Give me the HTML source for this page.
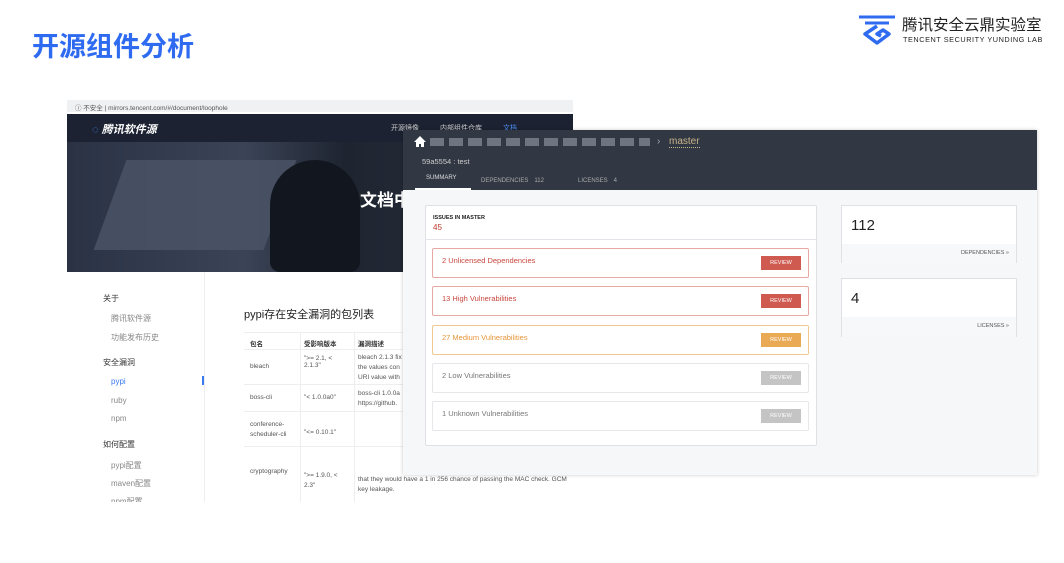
<!DOCTYPE html>
<html><head><meta charset="utf-8"><style>
*{margin:0;padding:0;box-sizing:border-box}
body{width:1064px;height:563px;background:#fff;position:relative;overflow:hidden;font-family:"Liberation Sans","Noto Sans CJK SC",sans-serif}
.a{position:absolute}
.s{position:absolute;font-size:8px;color:#888;white-space:nowrap}
.h{color:#333}
</style></head><body>
<div class="a" style="left:32px;top:25px;font-size:27px;font-weight:bold;color:#2f6bf0;letter-spacing:0px">开源组件分析</div>
<svg class="a" style="left:857px;top:13px" width="40" height="32" viewBox="0 0 40 32">
<path d="M2 4h36" stroke="#2f6bf0" stroke-width="3"/>
<path d="M8 10h24" stroke="#2f6bf0" stroke-width="3"/>
<path d="M20 13 L8 21 L20 30 L32 21 L26 17 L20 21 L24 23" fill="none" stroke="#2f6bf0" stroke-width="3.5" stroke-linejoin="round"/>
</svg>
<div class="a" style="left:902px;top:13px;font-size:15.5px;color:#222;white-space:nowrap">腾讯安全云鼎实验室</div>
<div class="a" style="left:903px;top:35px;font-size:7.3px;color:#222;letter-spacing:.55px;white-space:nowrap">TENCENT SECURITY YUNDING LAB</div>

<!-- left screenshot -->
<div class="a" style="left:67px;top:100px;width:506px;height:402px;overflow:hidden">
<div class="a" style="left:0;top:0;width:506px;height:12px;background:#f0f1f3;font-size:6.5px;color:#555;padding:2px 8px">ⓘ 不安全 | mirrors.tencent.com/#/document/loophole</div>
<div class="a" style="left:0;top:14px;width:506px;height:28px;background:#1c2231"></div>
<div class="a" style="left:25px;top:21px;color:#fff;font-size:11px;font-weight:bold;font-style:italic"><span style="color:#3a8ef0">◌</span> 腾讯软件源</div>
<div class="a" style="left:324px;top:23px;color:#ccc;font-size:7px;white-space:nowrap">开源镜像　　　内部组件仓库　　　<span style="color:#4b8cf5">文档</span></div>
<div class="a" style="left:0;top:42px;width:506px;height:130px;background:linear-gradient(90deg,#2a3244 0%,#3b4457 35%,#1e2430 55%,#2d3441 100%)"></div>
<div class="a" style="left:43px;top:60px;width:170px;height:90px;background:#4c5568;transform:skewX(-20deg);opacity:.8"></div>
<div class="a" style="left:203px;top:60px;width:90px;height:112px;background:#12161e;border-radius:45px 45px 10px 10px"></div>
<div class="a" style="left:293px;top:86px;color:#fff;font-size:17px;font-weight:bold">文档中</div>
<div class="a" style="left:137px;top:172px;width:1px;height:230px;background:#eee"></div>
<div class="s h" style="left:36px;top:193px">关于</div>
<div class="s" style="left:44px;top:213px">腾讯软件源</div>
<div class="s" style="left:44px;top:232px">功能发布历史</div>
<div class="s h" style="left:36px;top:257px">安全漏洞</div>
<div class="s" style="left:44px;top:277px;color:#3a7af0">pypi</div>
<div class="s" style="left:44px;top:296px">ruby</div>
<div class="s" style="left:44px;top:314px">npm</div>
<div class="s h" style="left:36px;top:339px">如何配置</div>
<div class="s" style="left:44px;top:360px">pypi配置</div>
<div class="s" style="left:44px;top:378px">maven配置</div>
<div class="s" style="left:44px;top:396px">npm配置</div>
<div class="a" style="left:135px;top:276px;width:2px;height:9px;background:#3a7af0"></div>
<div class="a" style="left:177px;top:206px;font-size:11px;color:#222">pypi存在安全漏洞的包列表</div>
<div class="a" style="left:177px;top:232px;width:170px;height:170px;font-size:6.5px;color:#555">
<div style="position:absolute;left:0;top:0;width:170px;border-top:1px solid #eee">
<div style="height:17px;border-bottom:1px solid #eee;padding:5px 6px;font-weight:bold;color:#333">包名<span style="position:absolute;left:60px">受影响版本</span><span style="position:absolute;left:114px">漏洞描述</span></div>
<div style="height:35px;border-bottom:1px solid #eee;padding:13px 6px">bleach<span style="position:absolute;left:60px;top:22px">"&gt;= 2.1, &lt;<br>2.1.3"</span><span style="position:absolute;left:114px;top:20px;line-height:10px">bleach 2.1.3 fix<br>the values con<br>URI value with</span></div>
<div style="height:27px;border-bottom:1px solid #eee;padding:9px 6px">boss-cli<span style="position:absolute;left:60px;top:61px">"&lt; 1.0.0a0"</span><span style="position:absolute;left:114px;top:56px;line-height:10px">boss-cli 1.0.0a<br>https://github.</span></div>
<div style="height:35px;border-bottom:1px solid #eee;padding:8px 6px;line-height:10px">conference-<br>scheduler-cli<span style="position:absolute;left:60px;top:95px">"&lt;= 0.10.1"</span></div>
<div style="height:55px;padding:21px 6px">cryptography<span style="position:absolute;left:60px;top:138px;line-height:10px">"&gt;= 1.9.0, &lt;<br>2.3"</span></div>
</div>
<div style="position:absolute;left:56px;top:0;width:1px;height:170px;background:#eee"></div>
<div style="position:absolute;left:110px;top:0;width:1px;height:170px;background:#eee"></div>
</div>
<div class="a" style="left:291px;top:375px;font-size:6.5px;color:#555;line-height:10px;white-space:nowrap">that they would have a 1 in 256 chance of passing the MAC check. GCM<br>key leakage.</div>
</div>

<!-- overlay -->
<div class="a" style="left:403px;top:130px;width:634px;height:345px;background:#f6f7f9;box-shadow:0 0 4px rgba(0,0,0,.2)"></div>
<div class="a" style="left:403px;top:130px;width:634px;height:60px;background:#313743"></div>
<svg class="a" style="left:414px;top:136px" width="12" height="11" viewBox="0 0 12 11"><path d="M6 0 L0 6 H2 V11 H5 V8 H7 V11 H10 V6 H12 Z" fill="#fff"/></svg>
<div class="a" style="left:430px;top:138px;width:220px;height:8px;background:repeating-linear-gradient(90deg,#8a909a 0 14px,#313743 14px 19px);opacity:.7"></div>
<div class="a" style="left:657px;top:136px;color:#aaa;font-size:10px">›</div>
<div class="a" style="left:669px;top:136px;color:#c8b58a;font-size:10px;border-bottom:1px dotted #c8b58a">master</div>
<div class="a" style="left:422px;top:157px;color:#ccc;font-size:7.5px">59a5554 : test</div>
<div class="a" style="left:426px;top:175px;color:#ddd;font-size:6px">SUMMARY</div>
<div class="a" style="left:481px;top:175px;color:#aaa;font-size:6px">DEPENDENCIES　112</div>
<div class="a" style="left:578px;top:175px;color:#aaa;font-size:6px">LICENSES　4</div>
<div class="a" style="left:415px;top:188px;width:56px;height:2px;background:#fff"></div>

<div class="a" style="left:425px;top:205px;width:392px;height:241px;background:#fff;border:1px solid #dfe1e5;border-radius:2px"></div>
<div class="a" style="left:426px;top:239px;width:390px;height:1px;background:#e3e5ea"></div>
<div class="a" style="left:433px;top:215px;font-size:5.5px;font-weight:bold;color:#222">ISSUES IN MASTER</div>
<div class="a" style="left:433px;top:223px;font-size:8px;color:#c0392b">45</div>

<div class="a" style="left:432px;top:248px;width:377px;height:30px;border:1px solid #e8a9a4;border-radius:2px;background:#fff"><span style="position:absolute;left:9px;top:7px;font-size:7.5px;color:#c9473e">2 Unlicensed Dependencies</span><span style="position:absolute;right:7px;top:7px;width:40px;height:14px;background:#cf5a50;color:#fff;font-size:5.5px;text-align:center;line-height:14px">REVIEW</span></div>
<div class="a" style="left:432px;top:286px;width:377px;height:30px;border:1px solid #e8a9a4;border-radius:2px;background:#fff"><span style="position:absolute;left:9px;top:7px;font-size:7.5px;color:#c9473e">13 High Vulnerabilities</span><span style="position:absolute;right:7px;top:7px;width:40px;height:14px;background:#cf5a50;color:#fff;font-size:5.5px;text-align:center;line-height:14px">REVIEW</span></div>
<div class="a" style="left:432px;top:325px;width:377px;height:30px;border:1px solid #f0c98f;border-radius:2px;background:#fff"><span style="position:absolute;left:9px;top:7px;font-size:7.5px;color:#e8963a">27 Medium Vulnerabilities</span><span style="position:absolute;right:7px;top:7px;width:40px;height:14px;background:#eaaa55;color:#fff;font-size:5.5px;text-align:center;line-height:14px">REVIEW</span></div>
<div class="a" style="left:432px;top:363px;width:377px;height:30px;border:1px solid #e6e7ea;border-radius:2px;background:#fff"><span style="position:absolute;left:9px;top:7px;font-size:7.5px;color:#777">2 Low Vulnerabilities</span><span style="position:absolute;right:7px;top:7px;width:40px;height:14px;background:#c4c4c4;color:#fff;font-size:5.5px;text-align:center;line-height:14px">REVIEW</span></div>
<div class="a" style="left:432px;top:401px;width:377px;height:30px;border:1px solid #e6e7ea;border-radius:2px;background:#fff"><span style="position:absolute;left:9px;top:7px;font-size:7.5px;color:#777">1 Unknown Vulnerabilities</span><span style="position:absolute;right:7px;top:7px;width:40px;height:14px;background:#c4c4c4;color:#fff;font-size:5.5px;text-align:center;line-height:14px">REVIEW</span></div>

<div class="a" style="left:841px;top:205px;width:176px;height:58px;background:#fff;border:1px solid #dfe1e5"><div style="position:absolute;left:0;top:38px;width:174px;height:19px;background:#f7f8fa"></div><span style="position:absolute;left:9px;top:11px;font-size:15px;color:#222">112</span><span style="position:absolute;right:7px;top:44px;font-size:5.5px;color:#555">DEPENDENCIES »</span></div>
<div class="a" style="left:841px;top:278px;width:176px;height:59px;background:#fff;border:1px solid #dfe1e5"><div style="position:absolute;left:0;top:38px;width:174px;height:20px;background:#f7f8fa"></div><span style="position:absolute;left:9px;top:11px;font-size:15px;color:#222">4</span><span style="position:absolute;right:7px;top:44px;font-size:5.5px;color:#555">LICENSES »</span></div>
</body></html>
